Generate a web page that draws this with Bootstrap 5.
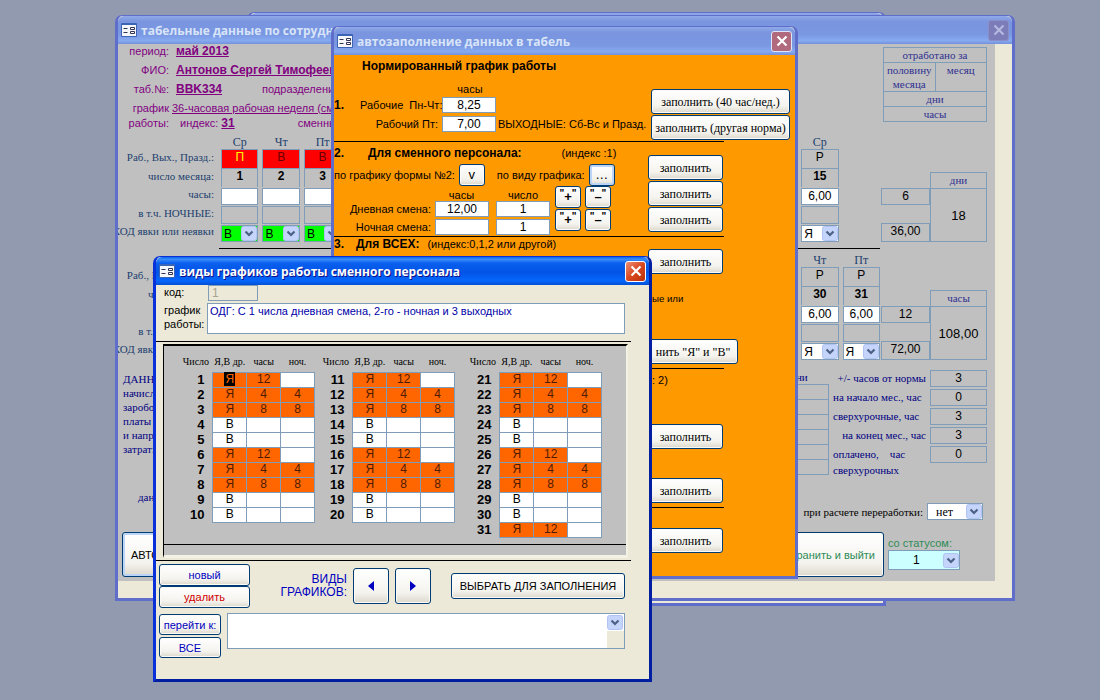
<!DOCTYPE html>
<html lang="ru">
<head>
<meta charset="utf-8">
<meta name="viewport" content="width=device-width, initial-scale=1">
<title>Табель</title>
<link href="https://cdn.jsdelivr.net/npm/bootstrap@5.3.0/dist/css/bootstrap.min.css" rel="stylesheet">
<style>
:root{--line:#7f9db9;--cream:#ece9d8;--grey:#c0c0c0}
body{background:#929aaf;color:#000;font:11px/14px "Liberation Sans",Arial,sans-serif}
.desktop{min-height:100vh;overflow:hidden}
.serif{font-family:"Liberation Serif","Times New Roman",serif}
/* windows */
.win{position:absolute;border:3px solid #5f6ecb;border-top-width:1px;border-radius:7px 7px 0 0;background:var(--cream);display:flex;flex-direction:column}
.win-body{flex:1;min-height:0;overflow:hidden}
.titlebar{height:28px;flex:none;padding:0 3px 0 1px;background:linear-gradient(#8fa9e8,#7b95df 20%,#7a97e2 65%,#86aaf0 88%,#7490dc);color:#d8e4f8;font:bold 12px/28px "Open Sans",sans-serif;border-radius:6px 6px 0 0;white-space:nowrap;overflow:hidden}
.titlebar span{flex:1;padding-top:2px}
.titlebar svg.ico{width:16px;height:14px;margin:0 4px 0 2px;flex:none}
.xclose{width:21px;height:21px;padding:0;border:1px solid #dfe6f8;border-radius:3px;background:#b0697d;color:#fff;line-height:1;display:flex;align-items:center;justify-content:center}
.xclose.dim{background:#7c7cb8;border-color:#8b8fc8;color:#b5b8e0}
.active-win{border-color:#0831d9;border-right-color:#001ea0;border-bottom-color:#001ea0}
.active-win .titlebar{background:linear-gradient(#0a62e8,#3a8dfb 8%,#0a5fee 22%,#0254e6 55%,#0566fc 85%,#0450d0);color:#fff;text-shadow:1px 1px #0f1089}
.active-win .xclose{background:linear-gradient(135deg,#ec9078,#da4820 50%,#b93009);border-color:#fff}
#w-back{left:247px;top:12px;width:639px;height:594px}
#w-main{left:115px;top:15px;width:900px;height:586px}
#w-fill{left:331px;top:26px;width:467px;height:553px}
#w-kind{left:153px;top:256px;width:499px;height:426px}
/* controls */
.xp{border:1px solid #003c74;border-radius:3px;background:linear-gradient(#fff,#f4f3ee 70%,#dcd8cc);color:#000;font-size:11px;line-height:12px;padding:0;white-space:nowrap;box-shadow:inset 0 0 0 1px #fbfaf6}
.xp:hover{background:#fff;color:inherit}
.xp.focused{box-shadow:inset 0 0 0 2px #bcd4f6}
.fld{border:1px solid var(--line);background:#fff;font-size:12px;line-height:13px;padding:0;text-align:center;width:54px;height:16px;border-radius:0;color:#000}
.drop{appearance:none;border:1px solid var(--line);border-radius:0;height:17px;width:100%;padding:0 16px 0 2px;font-size:12px;line-height:14px;color:#000;display:block;background:#fff url("data:image/svg+xml,%3Csvg xmlns='http://www.w3.org/2000/svg' width='16' height='15'%3E%3Crect x='.5' y='.5' width='15' height='14' rx='2' fill='%23c4d4fb' stroke='%23b0c3f2'/%3E%3Cpath d='M4.500 5.500l3.500 3.500 3.500-3.500' fill='none' stroke='%234d6185' stroke-width='2.200'/%3E%3C/svg%3E") no-repeat right center}
.drop.green{background-color:#0f0}
.cut{border-top:1px solid #000}
/* timesheet window */
.sheet{background:var(--grey);margin:0 17px 17px 0;flex:1;min-height:0}
.person{color:#800080;font-size:12px;height:92px;padding-right:8px}
.person dl{display:grid;grid-template-columns:51px 1fr;column-gap:7px;grid-auto-rows:19px;line-height:15px;white-space:nowrap}
.person dt{font-weight:400;text-align:right;font-size:11px}
.person dd{margin:0;font-size:11px}
.person .tight{line-height:15px;white-space:normal}
.person dd.tight{white-space:nowrap;margin-left:-4px}
.person .tight .in{padding-left:8px}
.person .dept{margin-left:40px}
.person .shift{margin-left:63px}
.person .big{font-weight:bold;font-size:12px}
.worked{width:104px;table-layout:fixed;border-collapse:collapse;color:#2f2f90;text-align:center;font-size:11px;line-height:14px;margin-top:3px}
.worked td{border:1px solid var(--line);padding:0;vertical-align:top}
.calline{margin:0 115px 5px 101px}
.cal{table-layout:fixed;border-collapse:separate;border-spacing:0;width:100%;color:#000}
.cal th,.cal td{padding:0;font-weight:400;vertical-align:bottom}
.cal .lbl{width:101px;text-align:right;padding:0 5px 4px 0;color:#1c3f6e;font-size:11px;line-height:14px;white-space:nowrap}
.cal .lbl span{float:right}
.cal .dow{color:#1c3f6e;font-size:12px;line-height:13px;text-align:center}
.cellbox{margin:0 2px;border:1px solid var(--line);text-align:center;font-size:12px;line-height:14px;overflow:hidden}
.cellbox.night,.codewrap{margin:1px 2px 0}
.h19{height:19px}.h18{height:18px}.h17{height:17px}
.nb{border-bottom:0}
.offday{background:#f00;color:#600}
.holiday{background:#f00;color:#ff0}
.numday{font-weight:bold}
.sums{width:106px;display:grid;grid-template-columns:49px 57px;grid-template-rows:16px 17px 18px 19px;align-self:end;text-align:center;font-size:12px;line-height:15px;margin-left:-1px}
.sums div{border:1px solid var(--line)}
.sums .cap{grid-column:2;border-bottom:0;color:#2f2f90;font-size:11px}
.sums .tot{grid-column:2;grid-row:2/5;display:flex;align-items:center;justify-content:center;font-size:13px}
.sums .low{grid-row:4}
.navy{color:#000080}
.lower{padding:6px 8px 0 0}
.notes{width:120px;padding:2px 0 0 5px;line-height:14px}
.rest{display:grid;grid-template-columns:97px 57px;grid-auto-rows:19px;line-height:16px;white-space:nowrap}
.rest output{border:1px solid var(--line);height:17px;text-align:center;font:12px/14px "Liberation Sans",sans-serif;color:#000}
.minibox{width:60px;border-collapse:collapse}
.minibox td{border:1px solid var(--line);height:15px;padding:0}
.teal{color:#2e8b57}
.h-save{height:45px}
.overrow{padding-right:12px;margin-bottom:12px}
.saverow{padding:0 35px 4px 4px}
/* auto-fill window */
.orange{background:#f90;display:flex;flex-direction:column}
.orange .cut{width:390px}
.orange section{display:flex;justify-content:space-between;white-space:nowrap}
.orange h2,.orange .no{font-size:12px;font-weight:bold;line-height:14px;margin:0}
.stack{width:147px;flex:none;display:flex;flex-direction:column;align-items:flex-start;gap:1px}
.stack .xp{width:75px;height:25px;font-family:"Liberation Serif",serif;font-size:12px}
.stack .wide{width:139px;margin-left:3px}
.stack .mid{width:90px}
.g1{display:grid;grid-template-columns:26px 82px 56px 1fr;align-items:center;grid-template-rows:15px 18px 19px}
.g2{display:grid;grid-template-columns:101px 61px 54px;grid-template-rows:10px 18px 18px;align-items:center}
.signs{display:grid;grid-template-columns:26px 26px;gap:1px 4px;margin-left:5px;align-content:start}
.sq{height:22px;width:26px;font-weight:bold;font-size:13px}
.sq sup{font-size:10px;top:-4px;line-height:0}
.h1s{height:86px;padding-bottom:1px}.h2s{height:94px}.h3s{height:131px}.h4s{height:138px}
/* schedule window */
.codebox{width:50px;color:#a9a391;background:var(--cream);text-align:left;padding-left:3px}
.descrow{padding:2px 0 0 8px;margin-bottom:7px}
.descr{resize:none;width:418px;height:31px;color:#0000a8;text-align:left;padding:1px 2px;display:block;font-size:11px}
.black-line{width:475px}
.panel{margin:2px 0 2px 7px;width:465px;height:214px;border:2px solid;border-color:#000 #f4f2e4 #f4f2e4 #000;border-width:2px 2px 3px 1px;background:var(--grey);display:flex;flex-direction:column}
.grids{flex:1;display:flex;padding:9px 0 0 15px}
.tail{height:11px}
.sch{border-collapse:collapse;text-align:center;font-size:12px;line-height:13px;table-layout:fixed;width:136px;height:max-content}
.sch+.sch{margin-left:4px}
.sch+.sch+.sch{margin-left:11px}
.sch thead th{font:10px/13px "Liberation Serif",serif;padding:0;height:17px;vertical-align:top;white-space:nowrap}
.sch tbody th{font-size:13px;padding:0 8px 0 0;text-align:right;white-space:nowrap}
.sch td{border:1px solid var(--line);padding:0;height:15px;background:#fff}
.sch td.on{background:#f60;color:#501c00}
.sch mark{background:#000;color:#f60;padding:0 1px}
.blue{color:#0000c0}
.red{color:#d00000}
.foot{display:grid;grid-template-columns:91px 1fr;width:469px;padding:3px 0 0 3px}
.foot .tall{height:22px}
.arrow{width:36px;height:36px;display:flex;align-items:center;justify-content:center}
.pair{gap:6px}
.kinds{font-size:12px;line-height:13px}
.pick{width:174px;height:26px;margin-left:14px}
.goto{width:62px;gap:2px;padding-top:3px}
.goto .xp{height:21px}
.jump{height:36px;border:1px solid var(--line);background:#fff;margin:2px 0 0 6px}
.jump .drop{border:0;height:100%;background-position:right 1px top 1px;background-color:#fff}
.pad-cream{width:17px;height:17px;background:var(--cream);position:absolute;right:0;bottom:0}
</style>
</head>
<body>
<svg class="d-none">
  <symbol id="form" viewBox="0 0 16 14"><rect width="16" height="14" rx="1" fill="#3c64b4"/><rect x="1" y="2" width="14" height="11" fill="#f4f6fa"/><path d="M2.500 5.500h4M2.500 9.500h4" stroke="#335" stroke-width="1"/><path d="M9.500 4.500h4v2h-4zM9.500 8.500h4v2h-4z" fill="#fff" stroke="#335"/></symbol>
  <symbol id="x" viewBox="0 0 12 12"><path d="M1.500 1.500l9 9M10.500 1.500l-9 9" stroke="currentColor" stroke-width="2.200"/></symbol>
</svg>
<main class="desktop position-relative">

<div class="win" id="w-back"><div class="titlebar"></div></div>

<section class="win" id="w-main">
  <header class="titlebar d-flex align-items-center"><svg class="ico"><use href="#form"/></svg><span>табельные данные по сотруднику</span><button class="xclose dim" aria-label="Закрыть"><svg width="12" height="12"><use href="#x"/></svg></button></header>
  <div class="win-body d-flex flex-column">
  <div class="sheet d-flex flex-column">
    <div class="person d-flex justify-content-between align-items-start">
      <dl class="m-0">
        <dt>период:</dt><dd><u class="big">май 2013</u></dd>
        <dt>ФИО:</dt><dd><u class="big">Антонов Сергей Тимофеевич</u></dd>
        <dt>таб.№:</dt><dd><u class="big">BBK334</u><span class="dept">подразделение:</span></dd>
        <dt class="tight">график работы:</dt><dd class="tight"><u>36-часовая рабочая неделя (сменная)</u><br><span class="in">индекс: <u class="big">31</u></span><span class="shift">сменный</span></dd>
      </dl>
      <table class="worked serif">
        <tr><td colspan="2">отработано за</td></tr>
        <tr><td>половину месяца</td><td>месяц</td></tr>
        <tr><td colspan="2">дни</td></tr>
        <tr><td colspan="2">часы</td></tr>
      </table>
    </div>
    <div class="d-flex pe-2"><table class="cal" data-from="1" data-to="15"></table>
      <div class="sums flex-shrink-0"><div class="cap serif">дни</div><div>6</div><div class="tot">18</div><div class="low">36,00</div></div>
    </div>
    <div style="padding-top:6px"><div class="cut calline"></div></div>
    <div class="d-flex pe-2"><table class="cal" data-from="16" data-to="31"></table>
      <div class="sums flex-shrink-0"><div class="cap serif">часы</div><div>12</div><div class="tot">108,00</div><div class="low">72,00</div></div>
    </div>
    <div class="lower d-flex justify-content-between serif navy mt-1">
      <div class="notes">ДАННЫЕ<br>начисленной<br>зароботной<br>платы<br>и направления<br>затрат:</div>
      <div class="d-flex gap-1">
        <div class="text-center">дни<table class="minibox"><tr><td></td></tr><tr><td></td></tr><tr><td></td></tr><tr><td></td></tr><tr><td></td></tr><tr><td></td></tr></table></div>
        <div class="rest">
          <span class="text-end pe-1">+/- часов от нормы</span><output>3</output>
          <span>на начало мес., час</span><output>0</output>
          <span>сверхурочные, час</span><output>3</output>
          <span class="text-end pe-1">на конец мес., час</span><output>3</output>
          <span>оплачено, &nbsp; &nbsp;час<br>сверхурочных</span><output>0</output>
        </div>
      </div>
    </div>
    <div class="mt-auto">
      <div class="overrow d-flex justify-content-between align-items-end serif">
        <span class="ps-3 ms-1 mb-3 navy">данные</span>
        <span class="d-flex align-items-center gap-1"><label for="over">при расчете переработки:</label><select id="over" class="drop ps-2" style="width:56px"><option>нет</option></select></span>
      </div>
      <div class="saverow d-flex justify-content-between">
        <button class="btn xp focused h-save px-2">АВТОЗАПОЛНЕНИЕ</button>
        <div class="d-flex gap-1">
          <button class="btn xp h-save px-2 teal">сохранить и выйти</button>
          <div><label for="stat" class="teal d-block pt-1">со статусом:</label><select id="stat" class="drop ps-4" style="width:72px;background-color:#cff;height:20px"><option>1</option></select></div>
        </div>
      </div>
    </div>
  </div></div>
</section>

<section class="win" id="w-fill">
  <header class="titlebar d-flex align-items-center"><svg class="ico"><use href="#form"/></svg><span>автозаполнение данных в табель</span><button class="xclose" aria-label="Закрыть"><svg width="12" height="12"><use href="#x"/></svg></button></header>
  <div class="win-body orange">
    <section class="h1s">
      <div>
        <h2 class="ps-4 ms-1 pt-1 mb-2">Нормированный график работы</h2>
        <div class="g1">
          <span></span><span></span><span class="text-center">часы</span><span></span>
          <b class="no">1.</b><label for="a1">Рабочие &nbsp;Пн-Чт:</label><input id="a1" class="fld" value="8,25"><span></span>
          <span></span><label for="a2" class="text-end pe-1">Рабочий Пт:</label><input id="a2" class="fld" value="7,00"><span>ВЫХОДНЫЕ: Сб-Вс и Празд.</span>
        </div>
      </div>
      <div class="stack justify-content-end"><button class="btn xp wide">заполнить (40 час/нед.)</button><button class="btn xp wide">заполнить (другая норма)</button></div>
    </section>
    <div class="cut"></div>
    <section class="h2s">
      <div>
        <div class="d-flex gap-4 pt-1"><b class="no">2.</b><h2>Для сменного персонала:</h2><span class="ps-3">(индекс :1)</span></div>
        <div class="d-flex align-items-center pt-1"><span>по графику формы №2:</span><button class="btn xp sq ms-1 fw-normal">v</button><span class="ms-2 ps-1">по виду графика:</span><button class="btn xp sq focused ms-1 fw-normal">…</button></div>
        <div class="d-flex">
          <div class="g2 pt-1">
            <span></span><span class="text-center pe-2">часы</span><span class="text-center">число</span>
            <label for="b1" class="text-end pe-1">Дневная смена:</label><input id="b1" class="fld" value="12,00"><input aria-label="число, дневная" class="fld" value="1">
            <label for="b2" class="text-end pe-1">Ночная смена:</label><input id="b2" class="fld"><input aria-label="число, ночная" class="fld" value="1">
          </div>
          <div class="signs">
            <button class="btn xp sq"><sup>"</sup>+<sup>"</sup></button><button class="btn xp sq"><sup>"</sup>–<sup>"</sup></button>
            <button class="btn xp sq"><sup>"</sup>+<sup>"</sup></button><button class="btn xp sq"><sup>"</sup>–<sup>"</sup></button>
          </div>
        </div>
      </div>
      <div class="stack justify-content-end pb-1"><button class="btn xp">заполнить</button><button class="btn xp">заполнить</button><button class="btn xp">заполнить</button></div>
    </section>
    <div class="cut"></div>
    <section class="h3s">
      <div class="d-flex"><b class="no">3.</b><h2 class="ps-2 ms-1">Для ВСЕХ:</h2><span class="ps-2">(индекс:0,1,2 или другой)</span></div>
      <div class="stack justify-content-between pt-2 pb-1"><button class="btn xp mt-1">заполнить</button><small class="ps-1">ые или</small><button class="btn xp mid mt-3">нить "Я" и "В"</button></div>
    </section>
    <div class="cut"></div>
    <section class="h4s">
      <i></i>
      <div class="stack justify-content-between pt-1 pb-1"><span class="ps-1">: 2)</span><button class="btn xp mt-2">заполнить</button><button class="btn xp">заполнить</button></div>
    </section>
    <div class="cut"></div>
    <section><i></i><div class="stack pt-3 mt-1"><button class="btn xp">заполнить</button></div></section>
  </div>
</section>

<section class="win active-win" id="w-kind">
  <header class="titlebar d-flex align-items-center"><svg class="ico"><use href="#form"/></svg><span>виды графиков работы сменного персонала</span><button class="xclose" aria-label="Закрыть"><svg width="12" height="12"><use href="#x"/></svg></button></header>
  <div class="win-body">
    <div class="d-flex ps-2"><label for="code" style="width:44px">код:</label><input id="code" class="fld codebox" value="1" disabled></div>
    <div class="d-flex descrow"><label for="descr" style="width:43px">график работы:</label><textarea id="descr" class="fld descr">ОДГ: С 1 числа дневная смена, 2-го - ночная и 3 выходных</textarea></div>
    <div class="cut black-line"></div>
    <div class="panel"><div class="grids"></div><div class="cut tail"></div></div>
    <div class="cut black-line"></div>
    <div class="foot">
      <div class="d-grid align-content-start"><button class="btn xp blue tall">новый</button><button class="btn xp red tall">удалить</button></div>
      <div class="d-flex align-items-center justify-content-end pair">
        <label class="blue text-end kinds">ВИДЫ<br>ГРАФИКОВ:</label>
        <button class="btn xp arrow" aria-label="назад"><svg width="6" height="10"><path d="M6 0v10L0 5z" fill="#0000c0"/></svg></button>
        <button class="btn xp arrow" aria-label="вперёд"><svg width="6" height="10"><path d="M0 0v10l6-5z" fill="#0000c0"/></svg></button>
        <button class="btn xp pick">ВЫБРАТЬ ДЛЯ ЗАПОЛНЕНИЯ</button>
      </div>
    </div>
    <div class="foot d-flex">
      <div class="d-grid goto"><button class="btn xp blue">перейти к:</button><button class="btn xp blue">ВСЕ</button></div>
      <div class="jump position-relative flex-fill"><select class="drop" aria-label="перейти к"><option></option></select><span class="pad-cream"></span></div>
    </div>
  </div>
</section>
</main>

<script>
// Shift cycle: day shift, night shift, its tail, two days off
const cycle = [['Я', 12, ''], ['Я', 4, 4], ['Я', 8, 8], ['В', '', ''], ['В', '', '']];
document.querySelector('.grids').innerHTML = [[1, 10], [11, 20], [21, 31]].map(([a, b]) => {
  let rows = '';
  for (let d = a; d <= b; d++) {
    const tds = cycle[(d - 1) % 5].map((v, i) =>
      `<td class="${v !== '' && v !== 'В' ? 'on' : ''}">${d === 1 && i === 0 ? `<mark>${v}</mark>` : v}</td>`);
    rows += `<tr><th>${d}</th>${tds.join('')}</tr>`;
  }
  return `<table class="sch"><thead><tr><th>Число</th><th>Я,В др.</th><th>часы</th><th>ноч.</th></tr></thead><tbody>${rows}</tbody></table>`;
}).join('');

// Days that have been filled in: weekday, kind of day, hours, attendance code
const days = {
  1: ['Ср', 'П', '', 'В'], 2: ['Чт', 'В', '', 'В'], 3: ['Пт', 'В', '', 'В'],
  15: ['Ср', 'Р', '6,00', 'Я'], 30: ['Чт', 'Р', '6,00', 'Я'], 31: ['Пт', 'Р', '6,00', 'Я']
};
const tone = { 'П': 'holiday', 'В': 'offday', 'Р': '' };
document.querySelectorAll('.cal').forEach(t => {
  const from = +t.dataset.from, to = +t.dataset.to;
  const row = (label, fn) => {
    let s = `<tr><th class="lbl serif"><span>${label}</span></th>`;
    for (let d = from; d < from + 16; d++) s += d > to || !days[d] ? '<td></td>' : `<td>${fn(days[d], d)}</td>`;
    return s + '</tr>';
  };
  t.innerHTML =
    row('', v => `<div class="dow serif">${v[0]}</div>`) +
    row('Раб., Вых., Празд.:', v => `<div class="cellbox h19 nb ${tone[v[1]]}">${v[1]}</div>`) +
    row('число месяца:', (v, d) => `<div class="cellbox h19 nb numday">${d}</div>`) +
    row('часы:', v => `<div class="cellbox h17 bg-white">${v[2]}</div>`) +
    row('в т.ч. НОЧНЫЕ:', () => '<div class="cellbox h18 night"></div>') +
    row('КОД явки или неявки', (v, d) => `<div class="codewrap"><select aria-label="код ${d}" class="drop ${v[3] === 'В' ? 'green' : ''}"><option>${v[3]}</option></select></div>`);
});
</script>
<script src="https://cdn.jsdelivr.net/npm/bootstrap@5.3.0/dist/js/bootstrap.bundle.min.js"></script>
</body>
</html>
